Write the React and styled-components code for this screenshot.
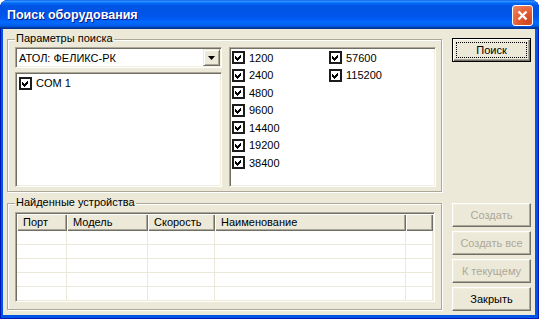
import React from "react";
import styled, { createGlobalStyle, css } from "styled-components";

const Global = createGlobalStyle`
  body { margin: 0; background: #fff; }
  * { box-sizing: border-box; }
`;

const sunken = css`
  border: 1px solid;
  border-color: #aca899 #fff #fff #aca899;
  box-shadow: inset 1px 1px 0 #716f64, inset -1px -1px 0 #f1efe2;
  background: #fff;
`;

const raised = css`
  background: #ece9d8;
  border: 1px solid;
  border-color: #fff #716f64 #716f64 #fff;
  box-shadow: inset -1px -1px 0 #aca899, inset 1px 1px 0 #f1efe2;
`;

const Window = styled.div`
  width: 539px;
  height: 319px;
  display: flex;
  flex-direction: column;
  border-radius: 8px 8px 0 0;
  overflow: hidden;
  background: #0054e3;
  box-shadow: inset 1px 0 0 #0019b8, inset -1px 0 0 #0019b8, inset 0 -1px 0 #0019b8;
  font-family: "Liberation Sans", Arial, sans-serif;
  font-size: 11px;
  color: #000;
`;

const TitleBar = styled.div`
  height: 29px;
  flex: none;
  display: flex;
  align-items: center;
  justify-content: space-between;
  padding: 1px 6px 0 7px;
  background: linear-gradient(
    to bottom,
    #0058ee 0%,
    #3593ff 4%,
    #288eff 6%,
    #127dff 8%,
    #036ffc 10%,
    #0262ee 14%,
    #0057e5 20%,
    #0054e3 24%,
    #0055eb 56%,
    #005bf5 66%,
    #026afe 76%,
    #0062ef 86%,
    #0052d6 92%,
    #0040ab 94%,
    #003092 100%
  );
`;

const Title = styled.span`
  font: bold 12.5px "Liberation Sans", Arial, sans-serif;
  color: #fff;
  text-shadow: 1px 1px 0 #0a1883;
`;

const CloseButton = styled.div`
  width: 21px;
  height: 21px;
  border: 1px solid #fff;
  border-radius: 3px;
  background: radial-gradient(circle at 80% 85%, #cc4622 0%, #e35a30 45%, #f08a66 100%);
  display: flex;
  align-items: center;
  justify-content: center;
`;

const Client = styled.div`
  flex: 1;
  margin: 0 4px 4px 3px;
  background: #ece9d8;
  display: flex;
  gap: 9px;
  padding: 0 4px 4px 4px;
`;

const LeftColumn = styled.div`
  width: 436px;
  display: flex;
  flex-direction: column;
  gap: 11px;
  padding-top: 10px;
`;

const GroupBox = styled.div`
  position: relative;
  width: 435px;
  height: ${(p) => p.$height}px;
  border: 1px solid #aca899;
  box-shadow: inset 1px 1px 0 #fff, 1px 1px 0 #fff;
  padding: ${(p) => p.$padding};
`;

const Legend = styled.span`
  position: absolute;
  top: -8px;
  left: 7px;
  padding: 0 1px;
  line-height: 13px;
  background: #ece9d8;
`;

const SearchGrid = styled.div`
  display: grid;
  grid-template-columns: 207px 207px;
  grid-template-rows: 21px 1fr;
  column-gap: 7px;
  row-gap: 4px;
  height: 100%;
`;

const Combo = styled.div`
  ${sunken};
  display: flex;
  align-items: center;
  justify-content: space-between;
  padding: 1px 1px 1px 3px;
`;

const DropButton = styled.div`
  width: 17px;
  height: 17px;
  border: 1px solid;
  border-color: #ece9d8 #716f64 #716f64 #ece9d8;
  box-shadow: inset 1px 1px 0 #fff, inset -1px -1px 0 #aca899;
  background: #ece9d8;
  display: flex;
  align-items: center;
  justify-content: center;
`;

const ListBox = styled.div`
  ${sunken};
  grid-column: ${(p) => p.$col};
  grid-row: ${(p) => p.$row};
  padding: ${(p) => p.$padding};
`;

const SpeedGrid = styled.div`
  display: grid;
  grid-auto-flow: column;
  grid-template-rows: repeat(7, 17.5px);
  grid-template-columns: 97px 97px;
`;

const CheckItem = styled.label`
  display: flex;
  align-items: center;
  gap: 4px;
  height: ${(p) => p.$h || 17.5}px;
  white-space: nowrap;
`;

const ListView = styled.div`
  ${sunken};
  height: 90px;
  overflow: hidden;
  padding: 1px 2px 1px 1px;
`;

const cols = "50px 81px 67px 191px 27px";

const HeaderRow = styled.div`
  display: grid;
  grid-template-columns: ${cols};
  height: 17px;
`;

const HeaderCell = styled.div`
  background: #ece9d8;
  padding-left: 6px;
  line-height: 16px;
  box-shadow: inset 1px 1px 0 #fff, inset -1px -1px 0 #716f64, inset -2px -2px 0 #aca899;
  white-space: nowrap;
  overflow: hidden;
`;

const Row = styled.div`
  display: grid;
  grid-template-columns: ${cols};
  height: 14px;
`;

const Cell = styled.div`
  border-right: 1px solid #ece9d8;
  border-bottom: 1px solid #ece9d8;
`;

const RightColumn = styled.div`
  width: 79px;
  display: flex;
  flex-direction: column;
  justify-content: space-between;
  padding-top: 9px;
`;

const ButtonStack = styled.div`
  display: flex;
  flex-direction: column;
  gap: 4px;
`;

const Button = styled.div`
  ${raised};
  position: relative;
  height: 24px;
  display: flex;
  align-items: center;
  justify-content: center;
  color: ${(p) => (p.$disabled ? "#aca899" : "#000")};
  ${(p) =>
    p.$default &&
    css`
      border: 1px solid #000;
      box-shadow: inset 1px 1px 0 #fff, inset -1px -1px 0 #716f64, inset -2px -2px 0 #aca899;
      &::after {
        content: "";
        position: absolute;
        inset: 3px;
        border: 1px dotted #000;
      }
    `}
`;

function CheckBox() {
  return (
    <svg width="13" height="13" viewBox="0 0 13 13" style={{ flex: "none" }}>
      <rect x="0" y="0" width="13" height="13" fill="#1c1c1c" />
      <rect x="2" y="2" width="9" height="9" fill="#fff" />
      <polygon points="3,5 5,7 9,3 9,6 5,10 3,8" fill="#000" shapeRendering="crispEdges" />
    </svg>
  );
}

const speeds = ["1200", "2400", "4800", "9600", "14400", "19200", "38400", "57600", "115200"];
const columns = ["Порт", "Модель", "Скорость", "Наименование", ""];

export default function App() {
  return (
    <>
      <Global />
      <Window>
        <TitleBar>
          <Title>Поиск оборудования</Title>
          <CloseButton>
            <svg width="13" height="13" viewBox="0 0 13 13">
              <path d="M2.5 2.5 L10.5 10.5 M10.5 2.5 L2.5 10.5" stroke="#fff" strokeWidth="2.4" />
            </svg>
          </CloseButton>
        </TitleBar>
        <Client>
          <LeftColumn>
            <GroupBox $height={153} $padding="7px 5px 4px 7px">
              <Legend>Параметры поиска</Legend>
              <SearchGrid>
                <Combo>
                  <span>АТОЛ: ФЕЛИКС-РК</span>
                  <DropButton>
                    <svg width="7" height="4" viewBox="0 0 7 4">
                      <polygon points="0,0 7,0 3.5,4" fill="#000" />
                    </svg>
                  </DropButton>
                </Combo>
                <ListBox $col="1" $row="2" $padding="2px 3px">
                  <CheckItem $h={16}>
                    <CheckBox />
                    COM 1
                  </CheckItem>
                </ListBox>
                <ListBox $col="2" $row="1 / 3" $padding="1px 2px">
                  <SpeedGrid>
                    {speeds.map((s) => (
                      <CheckItem key={s}>
                        <CheckBox />
                        {s}
                      </CheckItem>
                    ))}
                  </SpeedGrid>
                </ListBox>
              </SearchGrid>
            </GroupBox>
            <GroupBox $height={107} $padding="8px 6px 7px 7px">
              <Legend>Найденные устройства</Legend>
              <ListView>
                <HeaderRow>
                  {columns.map((c, i) => (
                    <HeaderCell key={i}>{c}</HeaderCell>
                  ))}
                </HeaderRow>
                {[0, 1, 2, 3, 4, 5].map((r) => (
                  <Row key={r}>
                    {columns.map((c, i) => (
                      <Cell key={i} />
                    ))}
                  </Row>
                ))}
              </ListView>
            </GroupBox>
          </LeftColumn>
          <RightColumn>
            <Button $default>Поиск</Button>
            <ButtonStack>
              <Button $disabled>Создать</Button>
              <Button $disabled>Создать все</Button>
              <Button $disabled>К текущему</Button>
              <Button>Закрыть</Button>
            </ButtonStack>
          </RightColumn>
        </Client>
      </Window>
    </>
  );
}
